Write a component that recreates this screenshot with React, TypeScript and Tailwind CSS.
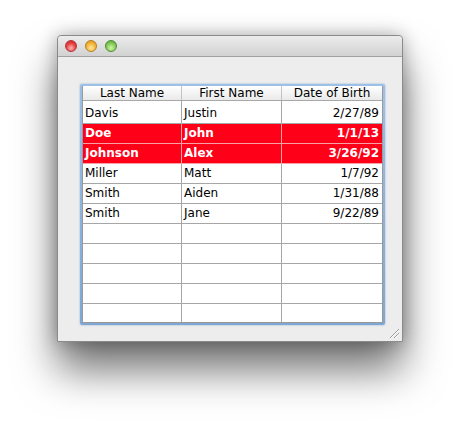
import React from "react";

type Row = { last: string; first: string; dob: string; sel?: boolean };

const rows: Row[] = [
  { last: "Davis", first: "Justin", dob: "2/27/89" },
  { last: "Doe", first: "John", dob: "1/1/13", sel: true },
  { last: "Johnson", first: "Alex", dob: "3/26/92", sel: true },
  { last: "Miller", first: "Matt", dob: "1/7/92" },
  { last: "Smith", first: "Aiden", dob: "1/31/88" },
  { last: "Smith", first: "Jane", dob: "9/22/89" },
  { last: "", first: "", dob: "" },
  { last: "", first: "", dob: "" },
  { last: "", first: "", dob: "" },
  { last: "", first: "", dob: "" },
  { last: "", first: "", dob: "" },
];

export default function App() {
  return (
    <div
      className="w-[459px] h-[421px] bg-white pl-[57px] pt-[35px]"
      style={{ fontFamily: '"DejaVu Sans", "Liberation Sans", sans-serif' }}
    >
      <div className="w-[346px] h-[307px] flex flex-col rounded-t-[4px] border border-[#8a8a8a] shadow-[0_28px_42px_rgba(0,0,0,0.55),0_0_18px_rgba(0,0,0,0.3)] bg-[#ededed]">
        <div className="h-[21px] shrink-0 flex items-center gap-[8px] pl-[7px] rounded-t-[4px] border-b border-[#a2a2a2] bg-gradient-to-b from-[#ececec] to-[#d2d2d2]">
          <span className="w-[12px] h-[12px] rounded-full border border-[#b0323a] bg-[radial-gradient(circle_at_50%_70%,#ffb6b4,#e5403f_55%,#c8262b)]" />
          <span className="w-[12px] h-[12px] rounded-full border border-[#b57f1d] bg-[radial-gradient(circle_at_50%_70%,#ffe7a0,#f1b43a_55%,#d88f1a)]" />
          <span className="w-[12px] h-[12px] rounded-full border border-[#4f8d2a] bg-[radial-gradient(circle_at_50%_70%,#d4f5a7,#83c95a_55%,#4fa232)]" />
        </div>
        <div className="relative flex-1 pl-[22px] pt-[27px]">
          <div className="w-[305px] rounded-[2px] bg-gradient-to-b from-[#9dc0e6] to-[#7ea7d6] p-[2px] shadow-[0_0_2px_rgba(90,140,200,0.7)]">
            <div className="w-full bg-white border-x border-b border-[#9a9a9a] overflow-hidden">
              <div className="h-[15px] flex border-b border-[#a8a8a8] bg-gradient-to-b from-white to-[#e9e9e9] text-[12px] leading-[15px] text-black">
                <div className="w-[99px] text-center border-r border-[#c4c4c4]">Last Name</div>
                <div className="w-[100px] text-center border-r border-[#c4c4c4]">First Name</div>
                <div className="flex-1 text-center">Date of Birth</div>
              </div>
              {rows.map((r, i) => {
                const last = i === rows.length - 1;
                const h = i === 0 ? "h-[23px] leading-[24px]" : last ? "h-[18px] leading-[19px]" : "h-[20px] leading-[19px]";
                const rowCls = r.sel
                  ? `${h} flex border-b border-[#f7a0a6] bg-[#ff0019] text-white font-bold text-[12px]`
                  : `${h} flex ${last ? "" : "border-b border-[#a6a6a6]"} text-black text-[12px]`;
                const cellB = r.sel ? "border-[#f7a0a6]" : "border-[#a6a6a6]";
                return (
                  <div key={i} className={rowCls}>
                    <div className={`w-[99px] pl-[2px] border-r ${cellB}`}>{r.last}</div>
                    <div className={`w-[100px] pl-[2px] border-r ${cellB}`}>{r.first}</div>
                    <div className="flex-1 text-right pr-[3px]">{r.dob}</div>
                  </div>
                );
              })}
            </div>
          </div>
          <svg className="absolute right-[2px] bottom-[2px]" width="12" height="12" viewBox="0 0 12 12">
            <line x1="2" y1="11" x2="11" y2="2" stroke="#9a9a9a" strokeWidth="1" />
            <line x1="6" y1="11" x2="11" y2="6" stroke="#9a9a9a" strokeWidth="1" />
            <line x1="3" y1="11" x2="11" y2="3" stroke="#ffffff" strokeWidth="0.8" />
            <line x1="7" y1="11" x2="11" y2="7" stroke="#ffffff" strokeWidth="0.8" />
          </svg>
        </div>
      </div>
    </div>
  );
}
